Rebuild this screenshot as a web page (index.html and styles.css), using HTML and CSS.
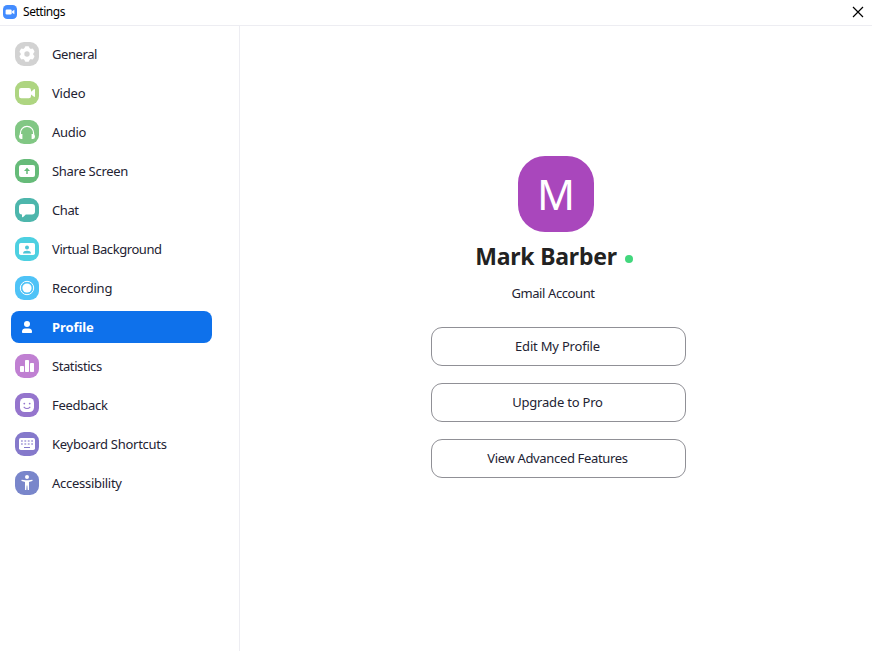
FILE: index.html
```html
<!DOCTYPE html>
<html lang="en">
<head>
<meta charset="utf-8">
<title>Settings</title>
<link rel="stylesheet" href="styles.css">
</head>
<body>
<header class="titlebar">
  <svg class="logo" viewBox="0 0 14 14"><rect width="14" height="14" rx="4.3" fill="#438cff"/><rect x="2.6" y="4.5" width="6.1" height="5" rx="1.2" fill="#fff"/><path d="M9.1 6.3 11.4 4.7v4.6L9.1 7.7z" fill="#fff"/></svg>
  <h1 class="title">Settings</h1>
  <button class="close" aria-label="Close"><svg viewBox="0 0 12 12"><path d="M1 1l10 10M11 1 1 11" stroke="#000" stroke-width="1.2"/></svg></button>
</header>
<div class="layout">
  <nav class="sidebar">
    <a class="item tight"><svg class="icon" viewBox="0 0 24 24"><rect width="24" height="24" rx="9" fill="#d2d2d2"/><g fill="#fff"><circle cx="12" cy="12" r="6.400"/><rect x="9.700" y="4.200" width="4.600" height="15.600" rx="1.300"/><rect x="9.700" y="4.200" width="4.600" height="15.600" rx="1.300" transform="rotate(60 12 12)"/><rect x="9.700" y="4.200" width="4.600" height="15.600" rx="1.300" transform="rotate(120 12 12)"/></g><circle cx="12" cy="12" r="2.700" fill="#d2d2d2"/></svg><span>General</span></a>
    <a class="item loose"><svg class="icon" viewBox="0 0 24 24"><rect width="24" height="24" rx="9" fill="#aed581"/><rect x="4" y="7" width="12" height="10.3" rx="2.2" fill="#fff"/><path d="M16 10.700 18.700 8.400Q20 7.600 20 9v6q0 1.400-1.300.6L16 13.400z" fill="#fff"/></svg><span>Video</span></a>
    <a class="item"><svg class="icon" viewBox="0 0 24 24"><rect width="24" height="24" rx="9" fill="#81c784"/><path d="M5.400 15.500v-2.200C5.400 9.200 8.200 6.400 12 6.400s6.600 2.800 6.600 6.900v2.200" fill="none" stroke="#fff" stroke-width="1.200"/><path d="M7.400 14v5H6.300A2.300 2.300 0 0 1 4 16.700c0-1.500.7-2.700 2.400-2.700zM16.600 14v5h1.100a2.300 2.300 0 0 0 2.300-2.300c0-1.500-.7-2.700-2.400-2.700z" fill="#fff"/></svg><span>Audio</span></a>
    <a class="item"><svg class="icon" viewBox="0 0 24 24"><rect width="24" height="24" rx="9" fill="#66bb79"/><rect x="4" y="6" width="16" height="12" rx="2" fill="#fff"/><path d="M12 15V9.700" fill="none" stroke="#66bb79" stroke-width="1.500"/><path d="M12 8.700 15 12H9z" fill="#66bb79"/></svg><span>Share Screen</span></a>
    <a class="item tight"><svg class="icon" viewBox="0 0 24 24"><rect width="24" height="24" rx="9" fill="#4db6ac"/><path d="M7 6h10a3 3 0 0 1 3 3v4.500a3 3 0 0 1-3 3h-6.200L8.200 18.900Q7 19.700 7 18.300v-1.800a3 3 0 0 1-3-3V9a3 3 0 0 1 3-3z" fill="#fff"/></svg><span>Chat</span></a>
    <a class="item tight"><svg class="icon" viewBox="0 0 24 24"><rect width="24" height="24" rx="9" fill="#4dd0e1"/><rect x="4" y="6" width="16" height="12" rx="1.800" fill="#fff"/><circle cx="12" cy="10.500" r="2" fill="#4dc4d6"/><path d="M8 16.400c0-2 1.600-2.700 4-2.700s4 .7 4 2.700z" fill="#4dc4d6"/></svg><span>Virtual Background</span></a>
    <a class="item loose"><svg class="icon" viewBox="0 0 24 24"><rect width="24" height="24" rx="9" fill="#4fc3f7"/><circle cx="12" cy="12" r="6.700" fill="none" stroke="#fff"/><circle cx="12" cy="12" r="4.600" fill="#fff"/></svg><span>Recording</span></a>
    <a class="item active"><svg class="icon" viewBox="0 0 24 24"><circle cx="12" cy="9" r="3" fill="#fff"/><path d="M7 17.200v-.7c0-2.100 1.400-3 3-3h4c1.600 0 3 .9 3 3v.7q0 .8-.8.8H7.800q-.8 0-.8-.8z" fill="#fff"/></svg><span>Profile</span></a>
    <a class="item tight"><svg class="icon" viewBox="0 0 24 24"><rect width="24" height="24" rx="9" fill="#c080d2"/><rect x="5" y="12" width="4" height="6" rx=".8" fill="#fff"/><rect x="10" y="6" width="4" height="12" rx=".8" fill="#fff"/><rect x="15" y="9" width="4" height="9" rx=".8" fill="#fff"/></svg><span>Statistics</span></a>
    <a class="item"><svg class="icon" viewBox="0 0 24 24"><rect width="24" height="24" rx="9" fill="#9575cd"/><rect x="5" y="5" width="14" height="14" rx="4.500" fill="#fff"/><circle cx="9.300" cy="10.600" r=".9" fill="#9575cd"/><circle cx="14.700" cy="10.600" r=".9" fill="#9575cd"/><path d="M8.700 13.800q3.300 3.400 6.600 0" fill="none" stroke="#9575cd" stroke-width="1.200"/></svg><span>Feedback</span></a>
    <a class="item"><svg class="icon" viewBox="0 0 24 24"><rect width="24" height="24" rx="9" fill="#8579cb"/><rect x="4" y="6" width="16" height="12" rx="1.800" fill="#fff"/><path d="M6 9h12M6 12h12" stroke="#8579cb" stroke-opacity=".75" stroke-width="1.600" stroke-dasharray="1.800 1.600"/><path d="M9 15.500h6" stroke="#8579cb"/></svg><span>Keyboard Shortcuts</span></a>
    <a class="item"><svg class="icon" viewBox="0 0 24 24"><rect width="24" height="24" rx="9" fill="#7986cb"/><circle cx="12" cy="6" r="2" fill="#fff"/><path d="M6.700 8.700 10.500 9.300h3l3.800-.6q.8.800 0 1.300L14 10.900V19h-1.300l-.4-4.500h-.6l-.4 4.500H10v-8.100L6.700 10q-.8-.5 0-1.300z" fill="#fff"/></svg><span>Accessibility</span></a>
  </nav>
  <main class="profile">
    <div class="avatar">M</div>
    <div class="identity"><h2 class="name">Mark Barber</h2><i class="status"></i></div>
    <p class="account">Gmail Account</p>
    <div class="actions">
      <button class="action loose">Edit My Profile</button>
      <button class="action loose">Upgrade to Pro</button>
      <button class="action">View Advanced Features</button>
    </div>
  </main>
</div>
</body>
</html>
```
FILE: styles.css
```css
* { box-sizing: border-box; }
body {
  margin: 0;
  height: 651px;
  overflow: hidden;
  display: flex;
  flex-direction: column;
  background: #fff;
  color: #232333;
  font: 13px/18px "Noto Sans", sans-serif;
}
h1, h2, p { margin: 0; }
button { font: inherit; color: inherit; background: #fff; padding: 0; border: 0; }
svg { display: block; }
.titlebar {
  display: flex;
  align-items: center;
  flex: none;
  height: 26px;
  padding: 0 8px 2px 3px;
  border-bottom: 1px solid #ededf2;
}
.logo { width: 14px; height: 14px; margin-right: 6px; }
.title { font-size: 12px; font-weight: 400; line-height: 16px; color: #000; letter-spacing: -0.45px; }
.close { margin-left: auto; width: 12px; height: 12px; }
.layout { display: flex; flex: 1; min-height: 0; }
.sidebar {
  width: 240px;
  padding: 12px 0 0 11px;
  border-right: 1px solid #ededf2;
  display: flex;
  flex-direction: column;
  gap: 7px;
}
.item {
  display: flex;
  align-items: center;
  gap: 13px;
  width: 201px;
  height: 32px;
  flex: none;
  padding-left: 4px;
  border-radius: 8px;
  letter-spacing: -0.28px;
}
.icon { width: 24px; height: 24px; }
.active { background: #0e71eb; color: #fff; font-weight: 700; letter-spacing: -0.1px; }
.profile {
  flex: 1;
  display: flex;
  flex-direction: column;
  align-items: center;
  padding: 130px 0 0 5px;
}
.avatar {
  width: 76px;
  height: 76px;
  margin-right: 5px;
  border-radius: 27px;
  background: #a947bc;
  color: #fff;
  font: 42px/76px "Noto Sans", sans-serif;
  text-align: center;
}
.identity { display: flex; align-items: center; gap: 8px; height: 32px; margin: 9px 9px 0 0; }
.name { font-size: 23px; line-height: 32px; padding-bottom: 2px; font-weight: 700; color: #222; white-space: nowrap; letter-spacing: -0.2px; }
.status { width: 8px; height: 8px; margin-top: 4px; border-radius: 50%; background: #42d77d; }
.account { margin: 11px 11px 0 0; letter-spacing: -0.4px; }
.actions { display: flex; flex-direction: column; gap: 17px; margin-top: 25px; }
.action { width: 255px; height: 39px; padding: 0 2px 2px 0; border: 1px solid #909096; border-radius: 11px; letter-spacing: -0.33px; }
.tight { letter-spacing: -0.42px; }
.loose { letter-spacing: -0.2px; }
```
